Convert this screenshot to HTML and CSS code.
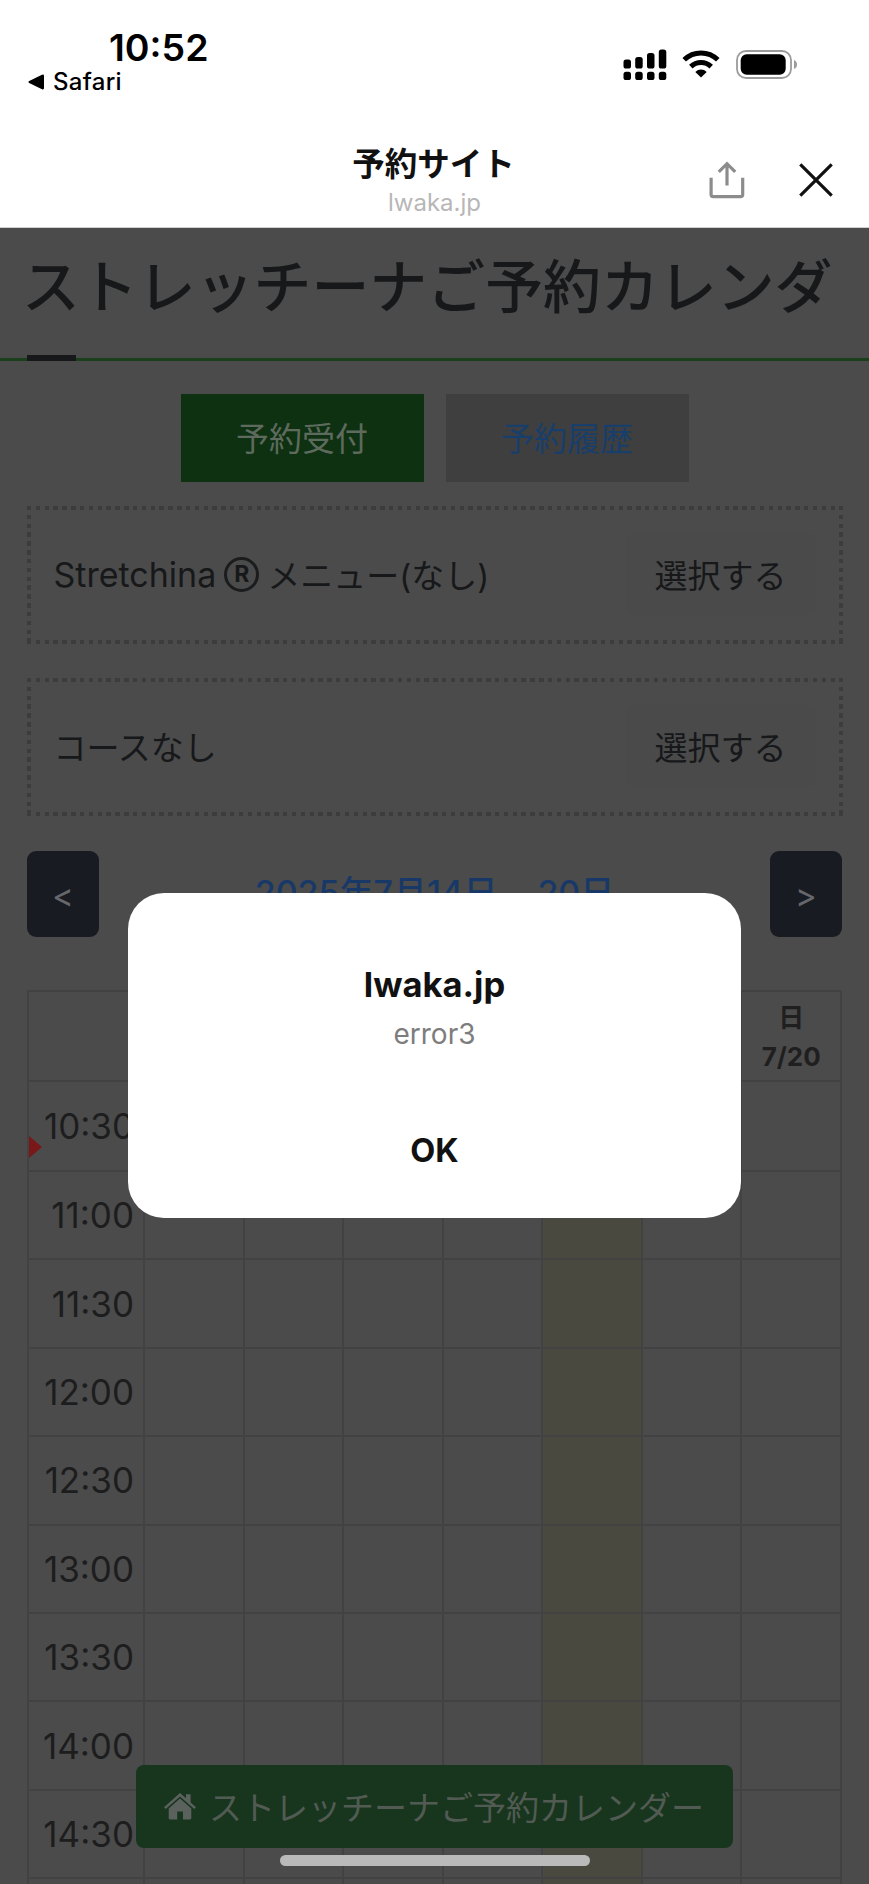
FILE: index.html
```html
<!DOCTYPE html>
<html lang="ja">
<head>
  <title>予約サイト</title>
  <meta charset="UTF-8">
  <meta name="viewport" content="width=device-width, initial-scale=1.0">
  <link rel="stylesheet" href="styles.css">
</head>
<body>
  <div class="status-bar">
    <div class="status-left">
      <div class="clock">10:52</div>
      <div class="back-app">
        <svg width="17" height="16" viewBox="0 0 17 16"><path d="M1.2 7 14 .7Q16 0 16 2v12q0 2-2 1.3L1.2 9Q-.4 8 1.2 7z"/></svg>
        <span>Safari</span>
      </div>
    </div>
    <div class="status-icons">
      <svg width="44" height="32" viewBox="0 0 44 32">
        <rect x="0.5" y="10.5" width="7.5" height="9" rx="2.6"/>
        <rect x="12.2" y="8" width="7.5" height="11.5" rx="2.6"/>
        <rect x="24" y="4" width="7.5" height="15.5" rx="2.6"/>
        <rect x="35.8" y="0.5" width="7.5" height="19" rx="2.6"/>
        <rect x="0.5" y="22.7" width="7.5" height="8.3" rx="2.6"/>
        <rect x="12.2" y="22.7" width="7.5" height="8.3" rx="2.6"/>
        <rect x="24" y="22.7" width="7.5" height="8.3" rx="2.6"/>
        <rect x="35.8" y="22.7" width="7.5" height="8.3" rx="2.6"/>
      </svg>
      <svg class="wifi" width="38" height="28" viewBox="0 0 38 28">
        <path d="M2.2 9.8a24.2 24.2 0 0 1 33.6 0M8.8 16.6a14.8 14.8 0 0 1 20.4 0" fill="none" stroke="#000" stroke-width="5"/>
        <path d="M19 27.5 13.3 21.9a8.2 8.2 0 0 1 11.4 0z"/>
      </svg>
      <svg class="battery" width="62" height="29" viewBox="0 0 62 29">
        <rect x="1" y="1" width="54" height="27" rx="9" fill="none" stroke="#9b9b9b" stroke-width="1.8"/>
        <rect x="4.7" y="4.3" width="45" height="20.4" rx="6"/>
        <path d="M58 10q3 1.5 3 4.5t-3 4.5z" fill="#9b9b9b"/>
      </svg>
    </div>
  </div>

  <header>
    <div class="site">
      <div class="site-name">予約サイト</div>
      <div class="site-host">lwaka.jp</div>
    </div>
    <div class="actions">
      <svg width="36" height="38" viewBox="0 0 36 38" fill="none" stroke="#8c8c8c" stroke-width="3.2">
        <path d="M2.1 16.7V33.5q0 2.2 2.2 2.2h27.2q2.2 0 2.2-2.2V16.7M18 24.5V3M9.8 10.9 18 2.7l8.2 8.2"/>
      </svg>
      <svg class="close" width="34" height="34" viewBox="0 0 34 34" fill="none" stroke="#111" stroke-width="3.2">
        <path d="M1.3 1.3 32.7 32.7M32.7 1.3 1.3 32.7"/>
      </svg>
    </div>
  </header>

  <main>
    <h1>ストレッチーナご予約カレンダ</h1>

    <div class="tabs">
      <a class="tab active">予約受付</a>
      <a class="tab">予約履歴</a>
    </div>

    <div class="choice">
      <div class="choice-name"><span class="latin">Stretchina</span><span class="reg">R</span><span class="menu">メニュー(なし)</span></div>
      <button>選択する</button>
    </div>
    <div class="choice">
      <div class="choice-name">コースなし</div>
      <button>選択する</button>
    </div>

    <div class="week">
      <button>&lt;</button>
      <div class="range"><span>2025年7月14日</span><span>-</span><span>20日</span></div>
      <button>&gt;</button>
    </div>

    <table>
      <thead>
        <tr><th class="time"></th><th></th><th></th><th></th><th></th><th class="today"></th><th></th><th>日<br>7/20</th></tr>
      </thead>
      <tbody>
        <tr class="now"><td class="time">10:30</td><td></td><td></td><td></td><td></td><td class="today"></td><td></td><td></td></tr>
        <tr><td class="time">11:00</td><td></td><td></td><td></td><td></td><td class="today"></td><td></td><td></td></tr>
        <tr><td class="time">11:30</td><td></td><td></td><td></td><td></td><td class="today"></td><td></td><td></td></tr>
        <tr><td class="time">12:00</td><td></td><td></td><td></td><td></td><td class="today"></td><td></td><td></td></tr>
        <tr><td class="time">12:30</td><td></td><td></td><td></td><td></td><td class="today"></td><td></td><td></td></tr>
        <tr><td class="time">13:00</td><td></td><td></td><td></td><td></td><td class="today"></td><td></td><td></td></tr>
        <tr><td class="time">13:30</td><td></td><td></td><td></td><td></td><td class="today"></td><td></td><td></td></tr>
        <tr><td class="time">14:00</td><td></td><td></td><td></td><td></td><td class="today"></td><td></td><td></td></tr>
        <tr><td class="time">14:30</td><td></td><td></td><td></td><td></td><td class="today"></td><td></td><td></td></tr>
        <tr><td class="time"></td><td></td><td></td><td></td><td></td><td class="today"></td><td></td><td></td></tr>
      </tbody>
    </table>
  </main>

  <a class="home-link">
    <svg width="32" height="27" viewBox="0 0 32 27">
      <path d="M16 0 22 5.3V1.2h4.6v8.2L32 14.2l-1.7 1.9L16 3.4 1.7 16.1 0 14.2z"/>
      <path d="M16 5.5 27.3 15.4V25q0 1.5-1.5 1.5H19V18.4h-5.8v8.1H6.2q-1.5 0-1.5-1.5V15.4z"/>
    </svg>
    <span>ストレッチーナご予約カレンダー</span>
  </a>

  <div class="dialog">
    <div class="dialog-title">lwaka.jp</div>
    <div class="dialog-text">error3</div>
    <div class="dialog-ok">OK</div>
  </div>

  <div class="home-indicator"></div>
</body>
</html>
```

FILE: styles.css
```css
* {
  box-sizing: border-box;
}

body {
  font-family: Inter, "Noto Sans CJK JP", sans-serif;
  margin: 0;
  height: 1884px;
  background-color: #fff;
  color: #17181a;
  overflow: hidden;
  position: relative;
}

svg {
  display: block;
}

.status-bar {
  height: 120px;
  display: flex;
  justify-content: space-between;
  padding: 26px 71px 0 28px;
  color: #000;
}

.clock {
  font-size: 37.5px;
  font-weight: 600;
  line-height: 44px;
  padding-left: 81px;
}

.back-app {
  display: flex;
  align-items: center;
  gap: 8px;
  font-size: 24px;
  font-weight: 500;
  line-height: 24px;
  letter-spacing: 0.3px;
}

.status-icons {
  display: flex;
  align-items: flex-start;
  padding-top: 23px;
}

.wifi {
  margin: 1px 16px 0 15px;
}

.battery {
  margin-top: 1px;
}

header {
  height: 108px;
  position: relative;
  border-bottom: 1px solid #d0d0d0;
  text-align: center;
}

.site-name {
  font-size: 32.5px;
  font-weight: 700;
  line-height: 44px;
  padding: 23px 2px 0 0;
  color: #111;
}

.site-host {
  font-size: 24px;
  line-height: 31px;
  color: #b7b7b7;
}

.actions {
  position: absolute;
  top: 41px;
  right: 36px;
  display: flex;
  align-items: center;
  gap: 54px;
}

main {
  height: 1656px;
  background-color: #4b4b4b;
  overflow: hidden;
}

h1 {
  margin: 0;
  height: 133px;
  padding: 17px 0 0 22px;
  border-bottom: 3px solid #19401a;
  font-size: 57.9px;
  font-weight: 500;
  line-height: 84px;
  white-space: nowrap;
  position: relative;
}

h1::after {
  content: "";
  position: absolute;
  left: 27px;
  bottom: -3px;
  width: 49px;
  height: 6px;
  background-color: #17181a;
}

.tabs {
  display: flex;
  justify-content: center;
  gap: 22px;
  margin-top: 33px;
}

.tab {
  width: 243px;
  height: 88px;
  background-color: #3f3f3f;
  color: #183e6b;
  font-size: 33px;
  line-height: 90px;
  text-align: center;
}

.tab.active {
  background-color: #0e3111;
  color: #5d6a5d;
}

.choice {
  --dots: #3c3c3c 0 4.4px, transparent 4.4px 8.83px;
  margin: 24px 26.5px 0;
  height: 138px;
  padding: 0 27px 2px 27px;
  display: flex;
  justify-content: space-between;
  align-items: center;
  font-size: 33px;
  background:
    repeating-linear-gradient(to right, var(--dots)) 0 0 / 100% 4px no-repeat,
    repeating-linear-gradient(to right, var(--dots)) 0 100% / 100% 4px no-repeat,
    repeating-linear-gradient(to bottom, var(--dots)) 0 0 / 4px 100% no-repeat,
    repeating-linear-gradient(to bottom, var(--dots)) 100% 0 / 4px 100% no-repeat;
}

.choice + .choice {
  margin-top: 34px;
}

.choice-name {
  display: flex;
  align-items: center;
}

.latin {
  font-size: 34px;
}

.reg {
  width: 35px;
  height: 35px;
  margin: 0 8px;
  border: 3px solid #1b1c1e;
  border-radius: 50%;
  font-size: 23px;
  font-weight: 700;
  line-height: 29px;
  text-align: center;
}

.choice button {
  width: 190px;
  height: 82px;
  border: none;
  border-radius: 9px;
  background-color: #4a4a4a;
  color: #17181a;
  font: inherit;
}

.week {
  display: flex;
  justify-content: space-between;
  margin: 35px 27px 0;
}

.week button {
  width: 72px;
  height: 86px;
  padding: 2px 0 0;
  border: none;
  border-radius: 9px;
  background-color: #181b21;
  color: #65676a;
  font-family: inherit;
  font-size: 33px;
}

.range {
  display: flex;
  font-size: 34px;
  font-weight: 500;
  line-height: 48px;
  padding-top: 18px;
  color: #183967;
}

.range span:nth-child(2) {
  width: 40px;
  text-align: center;
}

table {
  width: 815px;
  margin: 53px 0 0 27px;
  border-collapse: collapse;
  table-layout: fixed;
}

th,
td {
  height: 88.4px;
  padding: 0;
  border: 2px solid #424242;
}

th {
  height: 90px;
  padding-top: 1px;
  font-size: 26px;
  font-weight: 700;
  line-height: 39px;
  color: #1f1f20;
}

.now td {
  height: 90px;
}

.time {
  width: 116px;
}

td.time {
  padding-right: 9px;
  font-size: 35px;
  text-align: right;
  color: #1d1d1e;
}

.today {
  background-color: #4a493f;
}

.now .time {
  position: relative;
}

.now .time::before {
  content: "";
  position: absolute;
  left: 0;
  top: 54px;
  border: 11px solid transparent;
  border-left: 13px solid #781818;
  border-right: none;
}

.home-link {
  position: absolute;
  left: 136px;
  top: 1765px;
  width: 597px;
  height: 83px;
  display: flex;
  align-items: center;
  padding: 0 0 2px 28px;
  gap: 13px;
  border-radius: 8px;
  background-color: #18351e;
  color: #515b53;
  font-size: 33px;
  white-space: nowrap;
}

.home-link svg {
  margin-top: 2px;
  fill: #5b625d;
}

.dialog {
  position: absolute;
  left: 128px;
  top: 893px;
  width: 613px;
  height: 325px;
  padding-top: 69px;
  border-radius: 36px;
  background-color: #fff;
  color: #111;
  text-align: center;
}

.dialog-title {
  font-size: 34.5px;
  font-weight: 700;
  line-height: 46px;
}

.dialog-text {
  margin-top: 6px;
  font-size: 28px;
  line-height: 40px;
  color: #7d7d7d;
}

.dialog-ok {
  margin-top: 76px;
  font-size: 32.5px;
  font-weight: 700;
  line-height: 41px;
}

.home-indicator {
  position: absolute;
  left: 280px;
  top: 1855px;
  width: 310px;
  height: 11px;
  border-radius: 6px;
  background-color: #bababa;
}
```
